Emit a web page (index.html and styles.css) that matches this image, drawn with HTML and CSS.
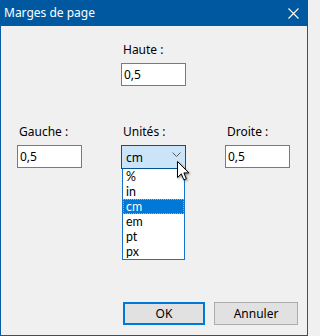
FILE: index.html
```html
<!DOCTYPE html>
<html lang="fr">
<head>
<meta charset="utf-8">
<title>Marges de page</title>
<link rel="stylesheet" href="styles.css">
</head>
<body>
<div class="window">
  <div class="titlebar">
    <span class="title">Marges de page</span>
    <svg class="close" width="11" height="11" viewBox="0 0 11 11"><path d="M0.5 0.5L10.5 10.5M10.5 0.5L0.5 10.5" stroke="#fff" stroke-width="1.1" fill="none"/></svg>
  </div>
  <div class="content">
    <div class="grid">
      <div class="field col2">
        <div class="label">Haute :</div>
        <div class="textbox">0,5</div>
      </div>
      <div class="field col1">
        <div class="label">Gauche :</div>
        <div class="textbox">0,5</div>
      </div>
      <div class="field col2">
        <div class="label">Unités :</div>
        <div class="combo-wrap">
          <div class="combo">
            <span>cm</span>
            <svg class="chev" width="9" height="5" viewBox="0 0 9 5"><path d="M0.5 0.5L4.5 4.5L8.5 0.5" stroke="#5a5a5a" stroke-width="1" fill="none"/></svg>
          </div>
          <ul class="list">
            <li>%</li>
            <li>in</li>
            <li class="sel">cm</li>
            <li>em</li>
            <li>pt</li>
            <li>px</li>
          </ul>
          <svg class="cursor" width="14" height="21" viewBox="0 0 14 21"><path d="M0.5 0.5V16.5L4.3 12.8L6.8 18.8L9.3 17.8L6.9 11.9H11.8Z" fill="#fff" stroke="#000" stroke-width="1" stroke-linejoin="miter"/></svg>
        </div>
      </div>
      <div class="field col3">
        <div class="label">Droite :</div>
        <div class="textbox">0,5</div>
      </div>
    </div>
    <div class="buttons">
      <div class="btn default">OK</div>
      <div class="btn wide">Annuler</div>
    </div>
  </div>
</div>
</body>
</html>
```
FILE: styles.css
```css
* { box-sizing: border-box; }
html, body { margin: 0; padding: 0; }
body {
  font-family: "Noto Sans", "Liberation Sans", sans-serif;
  font-size: 12px;
  color: #000;
  background: #f0f0f0;
}
.window {
  width: 308px;
  height: 336px;
  border: 1px solid #0a5ca3;
  border-top: none;
  background: #f0f0f0;
  display: flex;
  flex-direction: column;
}
.titlebar {
  height: 26px;
  background: #0059a0;
  color: #fff;
  display: flex;
  align-items: center;
  justify-content: space-between;
  padding: 0 9px 0 4px;
  margin: 0 -1px;
}
.title { line-height: 16px; }
.close { display: block; }
.content {
  flex: 1;
  display: flex;
  flex-direction: column;
}
.grid {
  display: grid;
  grid-template-columns: 65px 65px 65px;
  column-gap: 39px;
  row-gap: 38px;
  padding: 16px 0 0 16px;
  align-items: start;
}
.col1 { grid-column: 1; }
.col2 { grid-column: 2; }
.col3 { grid-column: 3; }
.field { display: flex; flex-direction: column; }
.label {
  height: 16px;
  line-height: 16px;
  margin-bottom: 5px;
  padding-left: 2px;
}
.textbox {
  height: 23px;
  border: 1px solid #7a7a7a;
  background: #fff;
  line-height: 21px;
  padding: 0 2px;
}
.combo-wrap { position: relative; }
.combo {
  height: 24px;
  border: 1px solid #005499;
  background: #cce4f7;
  display: flex;
  align-items: center;
  justify-content: space-between;
  padding: 0 4px 0 4px;
}
.chev { display: block; margin-top: -5px; }
.list {
  position: absolute;
  top: 24px;
  left: 1px;
  width: 63px;
  margin: 0;
  padding: 0;
  list-style: none;
  background: #fff;
  border: 1px solid #1673cc;
  border-top: none;
}
.list li {
  height: 15px;
  line-height: 15px;
  padding-left: 3px;
  font-family: "Lato", "Noto Sans", sans-serif;
  font-size: 12.4px;
}
.list li.sel {
  background: #0078d7;
  color: #fff;
  outline: 1px dotted #f59a45;
  outline-offset: -1px;
}
.cursor {
  position: absolute;
  left: 56px;
  top: 16px;
  filter: drop-shadow(1px 1px 1px rgba(0,0,0,0.45));
}
.buttons {
  margin-top: auto;
  display: flex;
  justify-content: flex-end;
  gap: 9px;
  padding: 0 9px 10px 0;
}
.btn {
  width: 82px;
  height: 23px;
  background: #e1e1e1;
  border: 1px solid #adadad;
  display: flex;
  align-items: center;
  justify-content: center;
}
.btn.default { border: 2px solid #0078d7; }
.btn.wide { width: 84px; }
```
